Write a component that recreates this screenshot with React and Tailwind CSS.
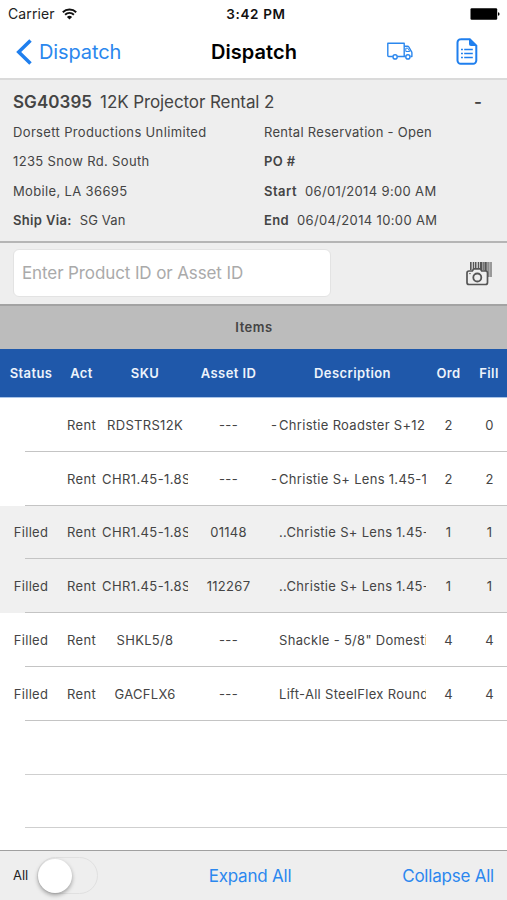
const COLS = "grid grid-cols-[62px_39px_87px_81px_157px_45px_36px] items-center";

const ROWS = [
  { h: "h-[54px]", status: "", act: "Rent", sku: "RDSTRS12K", asset: "---", mark: "-", desc: "Christie Roadster S+12", ord: 2, fill: 0 },
  { h: "h-[54px]", status: "", act: "Rent", sku: "CHR1.45-1.8S", long: true, asset: "---", mark: "-", desc: "Christie S+ Lens 1.45-1", ord: 2, fill: 2 },
  { h: "h-[53px]", status: "Filled", act: "Rent", sku: "CHR1.45-1.8S", long: true, asset: "01148", desc: "..Christie S+ Lens 1.45-", ord: 1, fill: 1, shaded: true },
  { h: "h-[54px]", status: "Filled", act: "Rent", sku: "CHR1.45-1.8S", long: true, asset: "112267", desc: "..Christie S+ Lens 1.45-", ord: 1, fill: 1, shaded: true },
  { h: "h-[54px]", status: "Filled", act: "Rent", sku: "SHKL5/8", asset: "---", desc: "Shackle - 5/8\" Domesti", ord: 4, fill: 4 },
  { h: "h-[54px]", status: "Filled", act: "Rent", sku: "GACFLX6", asset: "---", desc: "Lift-All SteelFlex Round", ord: 4, fill: 4 },
];

function Wifi() {
  return (
    <svg width="15" height="12" viewBox="0 0 15 12" fill="none" stroke="#111" strokeWidth="1.9">
      <path d="M0.8 4.2a9.6 9.6 0 0 1 13.4 0" />
      <path d="M3.1 6.7a6.3 6.3 0 0 1 8.8 0" />
      <path d="M7.5 11.6 4.9 8.9a3.8 3.8 0 0 1 5.2 0z" fill="#111" stroke="none" />
    </svg>
  );
}

function Battery() {
  return (
    <svg width="30" height="12" viewBox="0 0 30 12" fill="#000">
      <rect x="0.5" y="0.2" width="26.7" height="11.6" rx="1.2" />
      <path d="M28 4.2q1.6.3 1.6 1.8T28 7.8z" />
    </svg>
  );
}

function Truck() {
  return (
    <svg width="26" height="18" viewBox="0 0 26 18" fill="none" stroke="#2b87ee" strokeWidth="1.4">
      <path d="M5.800 14.500H1.700a.9.9 0 0 1-.9-.9V1.200h16.400v13.300H10.400" strokeLinejoin="round" />
      <path d="M17.200 4.200h3.200q1 0 1.500.8l2.400 4.300q.6.600.6 1.500v3.700h-1.400M17.200 14.500h1.200" strokeLinejoin="round" />
      <path d="M18.800 6.200h2.100l1.900 3.300h-4z" strokeWidth="1" />
      <circle cx="8.100" cy="14.900" r="2.100" />
      <circle cx="20.900" cy="14.900" r="2.100" />
    </svg>
  );
}

function DocumentIcon() {
  return (
    <svg width="22" height="27" viewBox="0 0 22 27" fill="none" stroke="#1f7fee" strokeWidth="2">
      <path d="M4.500 1.200h9.300L20.300 7.700v14.900a3.200 3.200 0 0 1-3.200 3.200H4.700a3.200 3.200 0 0 1-3.200-3.200V4.400a3.200 3.200 0 0 1 3.200-3.200z" />
      <path d="M13 .8v5.200a2 2 0 0 0 2 2h5.500z" fill="#1f7fee" stroke="none" />
      <path d="M8.200 11.500h8.600M8.200 15.500h8.600M8.200 19.500h8.600M5 11.500h1.900M5 15.500h1.900M5 19.500h1.900" strokeWidth="1.700" />
    </svg>
  );
}

function ScanIcon() {
  return (
    <svg width="28" height="25" viewBox="0 0 28 25" fill="none">
      <rect x="4" y="1" width="22" height="15" fill="#c4c4c4" />
      <rect x="4" y="9" width="6" height="7" fill="#eee" />
      <g fill="#555">
        <rect x="4" y="1" width="1.500" height="8" />
        <rect x="7" y="1" width="1" height="8" />
        <rect x="9" y="1" width="1.300" height="7" />
        <rect x="12" y="1" width="1" height="7" />
        <rect x="14" y="1" width="2" height="8" />
        <rect x="16.500" y="1" width="1.500" height="8" fill="#777" />
        <rect x="18.500" y="1" width="2.200" height="9" />
        <rect x="21.500" y="1" width="1.200" height="15" fill="#777" />
        <rect x="23.500" y="1" width="2.500" height="15" fill="#999" />
      </g>
      <path d="M3 10h3.300l1.500-2.200h6.400l1.500 2.200H19.500a2 2 0 0 1 2 2v9.500a2 2 0 0 1-2 2H3a2 2 0 0 1-2-2V12a2 2 0 0 1 2-2z" fill="#eee" stroke="#555" strokeWidth="1.700" />
      <circle cx="11.300" cy="16.500" r="4" stroke="#555" strokeWidth="1.800" />
      <path d="M3.200 12.600h1.500" stroke="#555" />
    </svg>
  );
}

export default function App() {
  return (
    <div className="flex h-[900px] w-[507px] flex-col overflow-hidden bg-white font-['Inter',sans-serif] text-[13px] text-[#444]">
      <header className="flex h-[80px] flex-col border-b-2 border-[#dadada]">
        <div className="grid h-[26px] grid-cols-3 items-center pl-2 pr-[7px] pt-[1px] text-[#222]">
          <div className="flex items-center gap-[7px]">
            <span className="text-[14px] tracking-[0.1px]">Carrier</span>
            <Wifi />
          </div>
          <span className="pl-[4px] pt-px text-center text-[13.500px] font-semibold tracking-[0.65px] text-[#111]">3:42 PM</span>
          <div className="flex justify-end"><Battery /></div>
        </div>
        <div className="grid h-[52px] grid-cols-3 items-center">
          <div className="flex items-center gap-[7px] pl-4 text-[20px] text-[#2b87ee]">
            <svg width="16" height="26" viewBox="0 0 16 26" fill="none" stroke="#1f7fee" strokeWidth="3.500">
              <path d="M14.500 1.500 2.700 13l11.800 11.500" />
            </svg>
            <span className="tracking-[-0.12px]">Dispatch</span>
          </div>
          <h1 className="pl-px text-center text-[20px] font-semibold tracking-[0.05px] text-black">Dispatch</h1>
          <div className="flex items-center justify-end gap-[43px] pb-[2px] pr-[29px]">
            <Truck />
            <DocumentIcon />
          </div>
        </div>
      </header>

      <section className="flex h-[163px] flex-col border-b-2 border-[#b5b5b5] bg-[#eee] px-[13px] pt-[10px]">
        <div className="flex h-[25px] items-center pt-px text-[17px]">
          <span className="font-semibold tracking-[0.05px]">SG40395</span>
          <span className="ml-2 tracking-[-0.09px]">12K Projector Rental 2</span>
          <span className="ml-auto mr-[12px] font-semibold">-</span>
        </div>
        <div className="mt-[3px] grid grid-cols-[251px_1fr] leading-[29.300px] tracking-[0.35px]">
          <span>Dorsett Productions Unlimited</span>
          <span className="tracking-[0.28px]">Rental Reservation - Open</span>
          <span>1235 Snow Rd. South</span>
          <span className="font-semibold">PO #</span>
          <span>Mobile, LA 36695</span>
          <span><b className="mr-2 font-semibold tracking-[0.5px]">Start</b>06/01/2014 9:00 AM</span>
          <span><b className="mr-2 font-semibold">Ship Via:</b><span className="tracking-[0.1px]">SG Van</span></span>
          <span><b className="mr-2 font-semibold">End</b>06/04/2014 10:00 AM</span>
        </div>
      </section>

      <section className="flex h-[61px] items-center justify-between bg-[#eee] pb-px pl-[13px] pr-[13px]">
        <div className="flex h-[48px] w-[318px] items-center rounded-[6px] border border-[#e3e3e3] bg-white pl-2 pt-[2px] text-[17px] tracking-[-0.11px] text-[#aaa]">
          Enter Product ID or Asset ID
        </div>
        <ScanIcon />
      </section>

      <div className="flex h-[45px] items-center justify-center border-t-2 border-[#a3a3a3] bg-[#bcbcbc] pl-px font-semibold tracking-[0.5px]">Items</div>

      <div className={`${COLS} h-[49px] border-b border-[#a9c4e8] bg-[#1f58aa] pt-px text-center font-semibold tracking-[0.4px] text-[#edf3fb]`}>
        <span>Status</span><span>Act</span><span className="pl-px">SKU</span><span>Asset ID</span>
        <span className="pl-[10px]">Description</span><span>Ord</span><span>Fill</span>
      </div>

      <main className="flex h-[452px] flex-col overflow-hidden">
        {ROWS.map((r, i) => (
          <div key={i} className={`${r.h} flex shrink-0 flex-col ${r.shaded ? "bg-[#f0f0f0]" : ""}`}>
            <div className={`${COLS} grow pt-[2px] text-center tracking-[0.3px]`}>
              <span>{r.status}</span>
              <span>{r.act}</span>
              <span className={`overflow-hidden whitespace-nowrap pl-px ${r.long ? "text-left tracking-[0.4px]" : ""}`}>{r.sku}</span>
              <span>{r.asset}</span>
              <span className="flex overflow-hidden whitespace-nowrap text-left">
                <span className="w-[10px] shrink-0 pl-[2px]">{r.mark}</span>
                <span className="w-[147px] shrink-0 overflow-hidden">{r.desc}</span>
              </span>
              <span>{r.ord}</span>
              <span className="pl-px">{r.fill}</span>
            </div>
            <div className="ml-[25px] h-px bg-[#c4c4c4]" />
          </div>
        ))}
        <div className="ml-[25px] h-[54px] shrink-0 border-b border-[#cfcfcf]" />
        <div className="ml-[25px] h-[53px] shrink-0 border-b border-[#cfcfcf]" />
      </main>

      <footer className="grid h-[50px] grid-cols-[170px_1fr_170px] items-center border-t border-[#a0a0a0] bg-[#eee] text-[17px] tracking-[-0.22px] text-[#2b87ee]">
        <div className="flex items-center gap-[9px] pl-[13px]">
          <span className="text-[13px] tracking-normal text-[#222]">All</span>
          <div className="flex h-[37px] w-[61px] items-center rounded-full border-[1.500px] border-[#e0e0e0]">
            <div className="h-[34px] w-[34px] rounded-full bg-white shadow-[0_2px_4px_rgba(0,0,0,0.35)]" />
          </div>
        </div>
        <span className="pr-[7px] pt-[2px] text-center">Expand All</span>
        <span className="pr-[13px] pt-[2px] text-right">Collapse All</span>
      </footer>
    </div>
  );
}
